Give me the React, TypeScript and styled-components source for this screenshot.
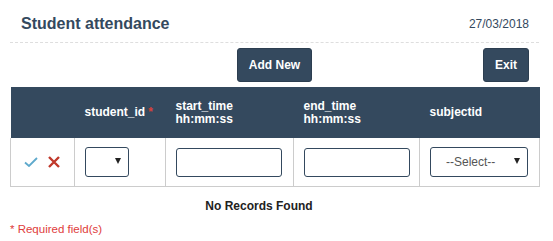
import { createGlobalStyle } from 'styled-components';
import styled from 'styled-components';

const GlobalStyle = createGlobalStyle`
  body {
    margin: 0;
    background: #fff;
    font-family: 'Liberation Sans', Arial, sans-serif;
  }
`;

const Page = styled.div`
  width: 529px;
  padding: 0 14px 0 10px;
`;

const Header = styled.div`
  height: 36px;
  padding: 6px 10px 0 11px;
  display: flex;
  justify-content: space-between;
  align-items: center;
  border-bottom: 1px dashed #dedede;
`;

const Title = styled.h2`
  margin: 0;
  font-size: 16px;
  font-weight: bold;
  color: #34495e;
`;

const DateText = styled.span`
  font-size: 12px;
  color: #34495e;
`;

const Toolbar = styled.div`
  display: grid;
  grid-template-columns: 1fr auto 1fr;
  margin-top: 5px;
`;

const Button = styled.button<{ $align?: 'end' }>`
  grid-column: ${({ $align }) => ($align === 'end' ? 3 : 2)};
  justify-self: ${({ $align }) => ($align === 'end' ? 'end' : 'center')};
  margin-right: ${({ $align }) => ($align === 'end' ? '10px' : '0')};
  height: 34px;
  padding: 0 11px;
  border: 1px solid #2c3e50;
  border-radius: 3px;
  background: #34495e;
  color: #fff;
  font-family: inherit;
  font-size: 12px;
  font-weight: bold;
`;

const Table = styled.table`
  width: 529px;
  margin-top: 5px;
  border-collapse: collapse;
  table-layout: fixed;
`;

const HeadCell = styled.th<{ $w: number }>`
  box-sizing: border-box;
  width: ${({ $w }) => $w}px;
  height: 51px;
  padding: 0 10px;
  background: #34495e;
  color: #fff;
  font-size: 12px;
  font-weight: bold;
  line-height: 13px;
  text-align: left;
  vertical-align: middle;
`;

const Req = styled.span`
  color: #d9413a;
  margin-left: 3px;
`;

const Cell = styled.td`
  height: 48px;
  padding: 0 10px;
  border: 1px solid #cccccc;
  border-top: none;
  vertical-align: middle;
`;

const Actions = styled.div`
  display: flex;
  align-items: center;
  gap: 10px;
  padding-left: 3px;
`;

const SelectWrap = styled.div<{ $w: number }>`
  position: relative;
  width: ${({ $w }) => $w}px;
`;

const Select = styled.select`
  appearance: none;
  width: 100%;
  height: 30px;
  padding: 0 20px 0 15px;
  border: 1px solid #34495e;
  border-radius: 3px;
  background: #fff;
  color: #555;
  font-family: inherit;
  font-size: 12px;
`;

const Arrow = styled.span`
  position: absolute;
  right: 8px;
  top: 11px;
  width: 0;
  height: 0;
  border-left: 3.5px solid transparent;
  border-right: 3.5px solid transparent;
  border-top: 6px solid #222;
  pointer-events: none;
`;

const Input = styled.input`
  box-sizing: border-box;
  width: 106px;
  height: 29px;
  border: 1px solid #34495e;
  border-radius: 3px;
  font-family: inherit;
  font-size: 12px;
`;

const Empty = styled.div`
  padding-right: 31px;
  margin-top: 12px;
  text-align: center;
  font-size: 12px;
  font-weight: bold;
  color: #222;
`;

const Required = styled.div`
  margin-top: 10px;
  font-size: 11.5px;
  color: #e03c3c;
`;

const CheckIcon = () => (
  <svg width="14" height="10" viewBox="0 0 14 10">
    <path d="M1 5.5 L5 9 L13 1" fill="none" stroke="#5ea9cc" strokeWidth="1.8" />
  </svg>
);

const CrossIcon = () => (
  <svg width="12" height="12" viewBox="0 0 12 12">
    <path d="M1 1 L11 11 M11 1 L1 11" stroke="#c0392b" strokeWidth="2.4" />
  </svg>
);

export default function App() {
  return (
    <Page>
      <GlobalStyle />
      <Header>
        <Title>Student attendance</Title>
        <DateText>27/03/2018</DateText>
      </Header>
      <Toolbar>
        <Button>Add New</Button>
        <Button $align="end">Exit</Button>
      </Toolbar>
      <Table>
        <thead>
          <tr>
            <HeadCell $w={64} />
            <HeadCell $w={91}>
              student_id<Req>*</Req>
            </HeadCell>
            <HeadCell $w={128}>
              start_time
              <br />
              hh:mm:ss
            </HeadCell>
            <HeadCell $w={126}>
              end_time
              <br />
              hh:mm:ss
            </HeadCell>
            <HeadCell $w={120}>subjectid</HeadCell>
          </tr>
        </thead>
        <tbody>
          <tr>
            <Cell>
              <Actions>
                <CheckIcon />
                <CrossIcon />
              </Actions>
            </Cell>
            <Cell>
              <SelectWrap $w={44}>
                <Select />
                <Arrow />
              </SelectWrap>
            </Cell>
            <Cell>
              <Input />
            </Cell>
            <Cell>
              <Input />
            </Cell>
            <Cell>
              <SelectWrap $w={98}>
                <Select defaultValue="">
                  <option value="">--Select--</option>
                </Select>
                <Arrow />
              </SelectWrap>
            </Cell>
          </tr>
        </tbody>
      </Table>
      <Empty>No Records Found</Empty>
      <Required>* Required field(s)</Required>
    </Page>
  );
}
